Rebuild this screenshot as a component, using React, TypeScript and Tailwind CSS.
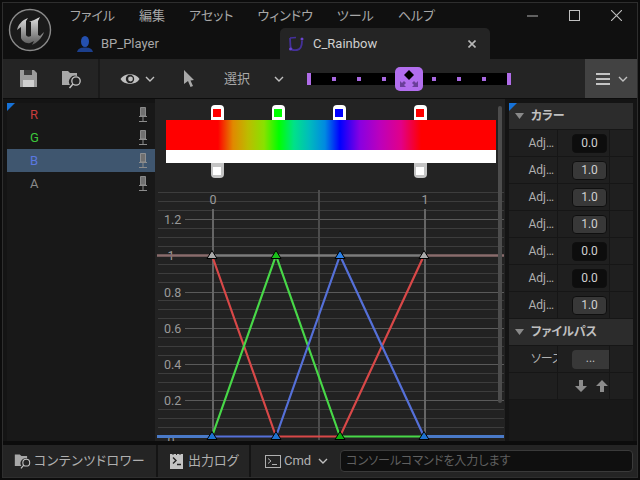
import React from "react";

const FONT = '"Roboto","Noto Sans CJK JP",sans-serif';

function Chevron({ c = "#c0c0c0", s = 10 }: { c?: string; s?: number }) {
  return (
    <svg width={s} height={s} viewBox="0 0 10 10" className="shrink-0">
      <path d="M1 3 L5 7 L9 3" fill="none" stroke={c} strokeWidth="1.4" />
    </svg>
  );
}

function Logo() {
  return (
    <svg width="44" height="44" viewBox="0 0 44 44" className="shrink-0">
      <defs>
        <linearGradient id="lg" x1="0" y1="0" x2="0" y2="1">
          <stop offset="0" stopColor="#e0e0e0" />
          <stop offset="1" stopColor="#585858" />
        </linearGradient>
      </defs>
      <circle cx="22" cy="22" r="20.5" fill="#1a1a1a" stroke="#8a8a8a" strokeWidth="1.4" />
      <path
        d="M9 22 C10 17 14 12 20 10 L18 13 L18 27 C19 29 21 29 23 28 L23 14 L21 14 C24 13 28 11 32 9 L30 13 L30 27 L32 28 L36 24 C34 30 29 35 24 37 L26 33 L22 35 C18 36 14 33 13 30 L13 19 Z"
        fill="url(#lg)"
      />
    </svg>
  );
}

function Bust() {
  return (
    <svg width="18" height="18" viewBox="0 0 18 18" className="shrink-0">
      <ellipse cx="9" cy="6.500" rx="4" ry="5.500" fill="#2450b0" />
      <path d="M1 17 C2 13 6 12.500 9 12.500 C12 12.500 16 13 17 17 Z" fill="#1c3f8c" />
    </svg>
  );
}

function CurveIcon() {
  return (
    <svg width="16" height="16" viewBox="0 0 16 16" className="shrink-0">
      <path d="M2 2 L2.500 11 C3 14 6 14.500 9 14 C12 13.500 14 10 14 5" fill="none" stroke="#44309a" strokeWidth="1.8" />
      <path d="M2 2 L8 1.500" stroke="#44309a" strokeWidth="1.400" />
      <circle cx="14" cy="3" r="1.500" fill="#6a45d0" />
      <circle cx="2.500" cy="13" r="1.500" fill="#6a45d0" />
    </svg>
  );
}

function FolderSearch({ s = 22 }: { s?: number }) {
  return (
    <svg width={s} height={s} viewBox="0 0 22 22" className="shrink-0">
      <path d="M1 3 L7 3 L9 5 L16 5 L16 8 A6 6 0 0 0 9 17 L1 17 Z" fill="#a8a8a8" />
      <circle cx="15" cy="13" r="4.200" fill="none" stroke="#c4c4c4" strokeWidth="1.300" />
      <path d="M12 16 L8.500 20" stroke="#c4c4c4" strokeWidth="1.500" />
    </svg>
  );
}

function Pin() {
  return (
    <svg width="8" height="15" viewBox="0 0 8 15" className="shrink-0">
      <path d="M1.500 .5 H6.500 V9 H1.500 Z" fill="#707070" stroke="#9a9a9a" strokeWidth=".8" />
      <path d="M0 9.500 H8 M0 14.500 H8 M4 9.500 V14.500" stroke="#8c8c8c" strokeWidth="1" />
    </svg>
  );
}

function MainToolbar() {
  return (
    <div className="h-[39px] bg-[#242424] flex items-center shrink-0 relative">
      <div className="w-[97px] h-full flex items-center border-r-2 border-[#1a1a1a] pl-[16px] gap-[23px] shrink-0">
        <svg width="19" height="19" viewBox="0 0 19 19" className="shrink-0">
          <path d="M1 1 H15 L18 4 V18 H1 Z" fill="#9c9c9c" />
          <path d="M5 1 H13 V6 H5 Z" fill="#3c3c3c" />
          <path d="M4 11 H15 V18 H4 Z" fill="#cfcfcf" />
        </svg>
        <FolderSearch />
      </div>
      <div className="flex items-center pl-[20px] shrink-0">
        <svg width="20" height="14" viewBox="0 0 20 14" className="shrink-0">
          <path d="M0.500 7 C4 0.500 16 0.500 19.500 7 C16 13.500 4 13.500 .5 7 Z" fill="#c0c0c0" />
          <circle cx="10" cy="7" r="4.200" fill="#242424" />
          <circle cx="10.500" cy="7" r="2.400" fill="#c0c0c0" />
        </svg>
        <div className="ml-[5px]"><Chevron /></div>
        <svg width="12" height="17" viewBox="0 0 12 17" className="ml-[28px] shrink-0">
          <path d="M1 0 L11 10 L7.500 10.500 L10 16 L7.500 17 L5 11 L1 14 Z" fill="#a8a8a8" />
        </svg>
        <span className="ml-[29px] text-[13px] text-[#a8a8a8] w-[26px] whitespace-nowrap">選択</span>
        <div className="ml-[24px]"><Chevron /></div>
      </div>
      <div className="ml-[23px] w-[204px] h-[12px] bg-black flex items-center relative shrink-0 border-x-4 border-[#b06ce8]">
        <div className="flex w-full pl-[21px] items-center">
          <div className="flex gap-[21px]">
            <i className="block w-[4px] h-[4px] bg-[#a868e0]" />
            <i className="block w-[4px] h-[4px] bg-[#a868e0]" />
            <i className="block w-[4px] h-[4px] bg-[#a868e0]" />
          </div>
          <div className="flex gap-[21px] ml-[46px]">
            <i className="block w-[4px] h-[4px] bg-[#a868e0]" />
            <i className="block w-[4px] h-[4px] bg-[#a868e0]" />
            <i className="block w-[4px] h-[4px] bg-[#a868e0]" />
          </div>
        </div>
        <div className="absolute left-[84px] top-[-6px] w-[28px] h-[24px] rounded-[5px] bg-[#b26eee] flex items-center justify-center">
          <svg width="22" height="20" viewBox="0 0 22 20">
            <path d="M11 1 L16 6 L11 11 L6 6 Z" fill="#000" />
            <path d="M2 18 L2 12 L4 14 L6 12 L8 14 L6 16 L8 18 Z M20 18 L20 12 L18 14 L16 12 L14 14 L16 16 L14 18 Z" fill="#6a3f9a" />
          </svg>
        </div>
      </div>
      <div className="ml-auto w-[52px] h-full bg-[#424242] flex items-center pl-[11px] gap-[8px] shrink-0">
        <svg width="14" height="12" viewBox="0 0 14 12" className="shrink-0">
          <path d="M0 1 H14 M0 6 H14 M0 11 H14" stroke="#c4c4c4" strokeWidth="2" />
        </svg>
        <Chevron />
      </div>
    </div>
  );
}

const CHANNELS: { n: string; c: string; sel?: boolean }[] = [
  { n: "R", c: "#c83c3c" },
  { n: "G", c: "#3cc83c" },
  { n: "B", c: "#5a78e0", sel: true },
  { n: "A", c: "#8a8a8a" },
];

function Corner() {
  return <div className="absolute left-0 top-0 w-0 h-0 border-t-[8px] border-r-[8px] border-t-[#1672d8] border-r-transparent" />;
}

function LeftPanel() {
  return (
    <div className="w-[148px] shrink-0 bg-[#181818] relative mt-[4px]">
      <Corner />
      {CHANNELS.map((ch) => (
        <div key={ch.n} className={`h-[23px] flex items-center pl-[23px] pr-[8px] justify-between ${ch.sel ? "bg-[#3f566f]" : ""}`}>
          <span className="text-[13px]" style={{ color: ch.c }}>{ch.n}</span>
          <Pin />
        </div>
      ))}
    </div>
  );
}

function GradKey({ x, c, bottom }: { x: number; c: string; bottom?: boolean }) {
  return (
    <div
      className={`absolute w-[13px] h-[15px] flex items-center justify-center ${bottom ? "top-[64px] bg-[#c4c4c4] rounded-b-[4px]" : "top-[6px] bg-white rounded-t-[4px]"}`}
      style={{ left: x - 155 - 6.5 }}
    >
      <i className="block w-[8px] h-[8px]" style={{ background: c }} />
    </div>
  );
}

function GradientEditor() {
  return (
    <div className="h-[81px] bg-[#232323] shrink-0 relative pt-[21px] pl-[11px]">
      <div
        className="w-[330px] h-[30px]"
        style={{
          background:
            "linear-gradient(90deg,#f00 0,#f00 52px,#e18900 67px,#bcbc00 82px,#89e100 98px,#0f0 113px,#00e189 128px,#00bcbc 143px,#0089e1 159px,#00f 174px,#8900e1 194px,#bc00bc 214px,#e10089 235px,#f00 255px,#f00 330px)",
        }}
      />
      <div className="w-[330px] h-[13px] bg-white" />
      <GradKey x={217} c="#f00" />
      <GradKey x={278} c="#0f0" />
      <GradKey x={339} c="#00f" />
      <GradKey x={420} c="#f00" />
      <GradKey x={217} c="#fff" bottom />
      <GradKey x={420} c="#fff" bottom />
    </div>
  );
}

function Tri({ x, y, c }: { x: number; y: number; c: string }) {
  return <path d={`M${x} ${y - 5} L${x + 5} ${y + 3} L${x - 5} ${y + 3} Z`} fill={c} stroke="#000" strokeWidth="1" />;
}

function Curves() {
  const minor = [192, 201, 210, 228, 237, 246, 264, 273, 282, 300, 309, 318, 337, 346, 355, 373, 382, 391, 409, 418, 427];
  const major: [string, number][] = [
    ["1.2", 219],
    ["0.8", 292],
    ["0.6", 328],
    ["0.4", 364],
    ["0.2", 400],
  ];
  const Y1 = 255.5;
  const Y0 = 436.5;
  return (
    <svg viewBox="155 180 350 261" width="350" height="261" className="block shrink-0">
      <rect x="155" y="180" width="350" height="261" fill="#222" />
      {minor.map((y) => (
        <line key={y} x1="158" x2="504" y1={y + 0.5} y2={y + 0.5} stroke="#3d3d3d" />
      ))}
      {major.map(([t, y]) => (
        <g key={t}>
          <line x1="185" x2="504" y1={y + 0.5} y2={y + 0.5} stroke="#5a5a5a" />
          <text x="164" y={y + 4.500} fontSize="12.500" fill="#9a9a9a" fontFamily={FONT}>{t}</text>
        </g>
      ))}
      <line x1="213" x2="213" y1="209" y2="440" stroke="#666" strokeWidth="2" />
      <line x1="319" x2="319" y1="190" y2="440" stroke="#4c4c4c" strokeWidth="2" />
      <line x1="425" x2="425" y1="209" y2="440" stroke="#666" strokeWidth="2" />
      <text x="213" y="204" textAnchor="middle" fontSize="12.500" fill="#9a9a9a" fontFamily={FONT}>0</text>
      <text x="425" y="204" textAnchor="middle" fontSize="12.500" fill="#9a9a9a" fontFamily={FONT}>1</text>
      <text x="171" y={Y1 + 4.500} textAnchor="middle" fontSize="12.500" fill="#9a9a9a" fontFamily={FONT}>1</text>
      <text x="171" y={Y0 + 8} textAnchor="middle" fontSize="12.500" fill="#9a9a9a" fontFamily={FONT}>0</text>

      <line x1="157" x2="212" y1={Y1} y2={Y1} stroke="#8a6c6c" strokeWidth="2.500" />
      <line x1="212" x2="424" y1={Y1} y2={Y1} stroke="#7c7c7c" strokeWidth="2.500" />
      <line x1="424" x2="504" y1={Y1} y2={Y1} stroke="#8a6c6c" strokeWidth="2.500" />

      <polyline points={`212,${Y1} 276,${Y0} 340,${Y0} 424,${Y1}`} fill="none" stroke="#d84848" strokeWidth="2.200" />
      <polyline points={`212,${Y0} 276,${Y1} 340,${Y0} 424,${Y0}`} fill="none" stroke="#48d848" strokeWidth="2.200" />
      <polyline points={`212,${Y0} 276,${Y0}`} fill="none" stroke="#5570d8" strokeWidth="2.200" />
      <polyline points={`276,${Y0} 340,${Y1} 424,${Y0}`} fill="none" stroke="#5570d8" strokeWidth="2.200" />
      <line x1="157" x2="212" y1={Y0} y2={Y0} stroke="#4a7ac8" strokeWidth="3" />
      <line x1="424" x2="504" y1={Y0} y2={Y0} stroke="#4a7ac8" strokeWidth="3" />

      <Tri x={212} y={Y1} c="#aaa" />
      <Tri x={276} y={Y1} c="#18c018" />
      <Tri x={340} y={Y1} c="#2a80e8" />
      <Tri x={424} y={Y1} c="#aaa" />
      <Tri x={212} y={Y0} c="#1e72d0" />
      <Tri x={276} y={Y0} c="#1e72d0" />
      <Tri x={340} y={Y0} c="#0cae0c" />
      <Tri x={424} y={Y0} c="#1e72d0" />
    </svg>
  );
}

function SecHead({ t }: { t: string }) {
  return (
    <div className="h-[27px] bg-[#2c2c2c] border-b border-[#161616] flex items-center pl-[6px] gap-[7px]">
      <svg width="9" height="6" viewBox="0 0 9 6" className="shrink-0"><path d="M0 0 H9 L4.500 6 Z" fill="#8a8a8a" /></svg>
      <span className="text-[12px] font-bold text-[#c0c0c0] whitespace-nowrap">{t}</span>
    </div>
  );
}

function Row({ label, v }: { label: string; v: string }) {
  const dark = v === "0.0";
  return (
    <div className="h-[27px] bg-[#1f1f1f] border-b border-[#161616] flex">
      <div className="w-[49px] border-r border-[#161616] flex items-center justify-end pr-[3px] text-[12px] text-[#b0b0b0] overflow-hidden whitespace-nowrap shrink-0">
        {label}
      </div>
      <div className="w-[52px] border-r border-[#161616] flex items-center pl-[14px] shrink-0">
        <div className={`w-[35px] h-[19px] rounded-[4px] border border-[#0f0f0f] flex items-center justify-center text-[12px] text-[#d0d0d0] ${dark ? "bg-[#0d0d0d]" : "bg-[#383838]"}`}>
          {v}
        </div>
      </div>
    </div>
  );
}

function RightPanel() {
  const vals = ["0.0", "1.0", "1.0", "1.0", "0.0", "0.0", "1.0"];
  return (
    <div className="w-[124px] shrink-0 bg-[#181818] relative mt-[4px]">
      <SecHead t="カラー" />
      {vals.map((v, i) => (
        <Row key={i} label="Adj…" v={v} />
      ))}
      <SecHead t="ファイルパス" />
      <div className="h-[27px] bg-[#1f1f1f] border-b border-[#161616] flex">
        <div className="w-[49px] border-r border-[#161616] flex items-center pl-[22px] text-[12px] text-[#b0b0b0] overflow-hidden whitespace-nowrap shrink-0">
          ソース
        </div>
        <div className="w-[52px] border-r border-[#161616] flex items-center pl-[14px] shrink-0">
          <div className="w-[38px] h-[19px] rounded-l-[4px] bg-[#383838] flex items-center justify-center text-[12px] text-[#c0c0c0] pb-[3px]">...</div>
        </div>
      </div>
      <div className="h-[27px] bg-[#1f1f1f] border-b border-[#161616] flex">
        <div className="w-[49px] border-r border-[#161616] shrink-0" />
        <div className="w-[52px] border-r border-[#161616] flex items-center pl-[17px] gap-[9px] shrink-0">
          <svg width="12" height="12" viewBox="0 0 12 12" className="shrink-0"><path d="M4 0 H8 V6 H12 L6 12 L0 6 H4 Z" fill="#8c8c8c" /></svg>
          <svg width="12" height="12" viewBox="0 0 12 12" className="shrink-0"><path d="M4 12 H8 V6 H12 L6 0 L0 6 H4 Z" fill="#8c8c8c" /></svg>
        </div>
      </div>
      <Corner />
    </div>
  );
}

function StatusBar() {
  return (
    <div className="h-[32px] mt-[4px] flex shrink-0 gap-[2px] bg-[#141414]">
      <div className="w-[153px] bg-[#242424] flex items-center pl-[11px] gap-[1px] text-[#b0b0b0] text-[13px] whitespace-nowrap shrink-0">
        <FolderSearch s={18} />
        <span className="ml-[1px] tracking-[0.5px]">コンテンツドロワー</span>
      </div>
      <div className="w-[91px] bg-[#242424] flex items-center pl-[12px] text-[#b0b0b0] text-[13px] whitespace-nowrap shrink-0">
        <svg width="13" height="16" viewBox="0 0 13 16" className="shrink-0">
          <path d="M0 1 H13 V16 H0 Z" fill="#c4c4c4" />
          <path d="M3 4.500 L6 7.500 L3 10.500 M7 11.500 H11" fill="none" stroke="#242424" strokeWidth="1.400" />
          <path d="M3 0 V2 M6.500 0 V2 M10 0 V2" stroke="#242424" strokeWidth="1" />
        </svg>
        <span className="ml-[5px]">出力ログ</span>
      </div>
      <div className="flex-1 bg-[#242424] flex items-center pl-[14px] text-[#b0b0b0] min-w-0">
        <svg width="16" height="13" viewBox="0 0 16 13" className="shrink-0">
          <rect x=".5" y=".5" width="15" height="12" fill="none" stroke="#b0b0b0" />
          <path d="M3 3.500 L6 6 L3 8.500 M7 9.500 H12" fill="none" stroke="#b0b0b0" />
        </svg>
        <span className="ml-[3px] text-[13px]">Cmd</span>
        <div className="ml-[7px]"><Chevron /></div>
        <div className="ml-[12px] w-[293px] h-[22px] rounded-[4px] bg-[#0f0f0f] border border-[#3a3a3a] flex items-center pl-[5px] text-[12px] text-[#606060] whitespace-nowrap shrink-0">
          コンソールコマンドを入力します
        </div>
      </div>
    </div>
  );
}

export default function App() {
  return (
    <div className="w-[640px] h-[480px] bg-[#0c0c0c] p-[2px] overflow-hidden [font-feature-settings:'palt']" style={{ fontFamily: FONT }}>
      <div className="w-full h-full border border-[#2e2e2e] flex flex-col overflow-hidden">
        <div className="h-[56px] flex shrink-0 bg-[#101010]">
          <div className="pl-[5px] pt-[5px] shrink-0"><Logo /></div>
          <div className="flex-1 flex flex-col min-w-0">
            <div className="h-[25px] flex items-center pl-[18px] gap-[24px] text-[13px] text-[#a8a8a8] shrink-0">
              <span>ファイル</span>
              <span>編集</span>
              <span>アセット</span>
              <span>ウィンドウ</span>
              <span>ツール</span>
              <span>ヘルプ</span>
              <div className="ml-auto flex items-center gap-[31px] pr-[15px]">
                <svg width="11" height="11" viewBox="0 0 11 11" className="shrink-0"><path d="M0 6 H11" stroke="#b0b0b0" strokeWidth="1" /></svg>
                <svg width="11" height="11" viewBox="0 0 11 11" className="shrink-0"><rect x=".5" y=".5" width="10" height="10" fill="none" stroke="#c0c0c0" /></svg>
                <svg width="11" height="11" viewBox="0 0 11 11" className="shrink-0"><path d="M0 0 L11 11 M11 0 L0 11" stroke="#c0c0c0" strokeWidth="1.100" /></svg>
              </div>
            </div>
            <div className="h-[31px] flex items-end shrink-0">
              <div className="w-[228px] h-full flex items-center pl-[24px] text-[13px] text-[#a8a8a8] shrink-0">
                <Bust />
                <span className="ml-[7px]">BP_Player</span>
              </div>
              <div className="w-[210px] h-full rounded-t-[5px] bg-[#242424] flex items-center pl-[8px] pr-[14px] text-[13px] text-[#d0d0d0] shrink-0">
                <CurveIcon />
                <span className="ml-[9px]">C_Rainbow</span>
                <svg width="8" height="8" viewBox="0 0 8 8" className="ml-auto shrink-0"><path d="M.5 .5 L7.500 7.500 M7.500 .5 L.5 7.500" stroke="#b8b8b8" strokeWidth="1.600" /></svg>
              </div>
            </div>
          </div>
        </div>
        <MainToolbar />
        <div className="h-[342px] mt-[1px] flex pl-[4px] pr-[3px] shrink-0 bg-[#141414]">
          <LeftPanel />
          <div className="w-[350px] shrink-0 flex flex-col relative">
            <GradientEditor />
            <Curves />
            <div className="absolute left-[343px] top-[7px] w-[4px] h-[297px] rounded-full bg-[#4c4c4c]" />
          </div>
          <div className="w-[4px] shrink-0" />
          <RightPanel />
        </div>
        <StatusBar />
      </div>
    </div>
  );
}
